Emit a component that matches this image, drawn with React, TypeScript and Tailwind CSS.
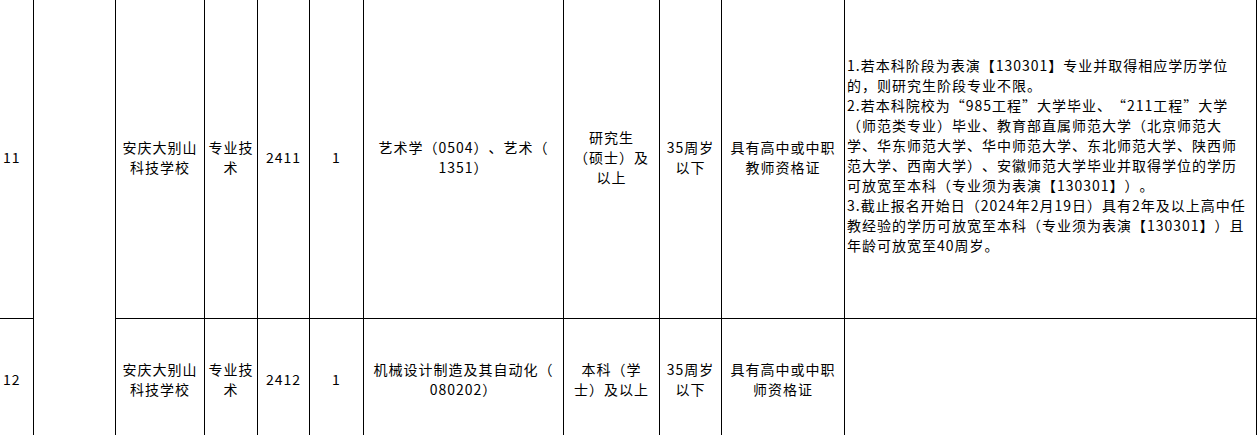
import React from 'react';

// 岗位表的两行，列宽按截图量出
const cols = 'grid-cols-[34px_82px_89px_53px_52px_54px_200px_96px_62px_123px_412px]';

const remarks = [
  '1.若本科阶段为表演【130301】专业并取得相应学历学位',
  '的，则研究生阶段专业不限。',
  '2.若本科院校为“985工程”大学毕业、“211工程”大学',
  '（师范类专业）毕业、教育部直属师范大学（北京师范大',
  '学、华东师范大学、华中师范大学、东北师范大学、陕西师',
  '范大学、西南大学）、安徽师范大学毕业并取得学位的学历',
  '可放宽至本科（专业须为表演【130301】）。',
  '3.截止报名开始日（2024年2月19日）具有2年及以上高中任',
  '教经验的学历可放宽至本科（专业须为表演【130301】）且',
  '年龄可放宽至40周岁。',
];

const rows = [
  {
    no: '11',
    cells: [
      ['安庆大别山', '科技学校'],
      ['专业技', '术'],
      ['2411'],
      ['1'],
      ['艺术学（0504）、艺术（', '1351）'],
      ['研究生', '（硕士）及', '以上'],
      ['35周岁', '以下'],
      ['具有高中或中职', '教师资格证'],
    ],
    remarks,
  },
  {
    no: '12',
    cells: [
      ['安庆大别山', '科技学校'],
      ['专业技', '术'],
      ['2412'],
      ['1'],
      ['机械设计制造及其自动化（', '080202）'],
      ['本科（学', '士）及以上'],
      ['35周岁', '以下'],
      ['具有高中或中职', '师资格证'],
    ],
    remarks: [] as string[],
  },
];

function Cell({ lines }: { lines: string[] }) {
  return (
    <div className="flex flex-col items-center justify-center text-center border-r border-b border-black">
      {lines.map((l, i) => (
        <div key={i} className="whitespace-nowrap">{l}</div>
      ))}
    </div>
  );
}

export default function App() {
  return (
    <div className="h-[435px] w-[1257px] overflow-hidden bg-white text-black">
      <div
        className={`grid ${cols} grid-rows-[323px_120px] -mt-[4px] text-[14px] leading-[20px] tracking-[1px] [text-spacing-trim:space-all]`}
        style={{ fontFamily: '"Noto Sans CJK SC", "Noto Sans", sans-serif' }}
      >
        {rows.map((row, r) => (
          <React.Fragment key={row.no}>
            <div className="flex items-center pl-[3px] border-r border-b border-black">{row.no}</div>
            {r === 0 && <div className="row-span-2 border-r border-b border-black" />}
            {row.cells.map((c, i) => (
              <Cell key={i} lines={c} />
            ))}
            <div className="flex flex-col justify-center pl-[2px] pb-[5px] border-r border-b border-black">
              {row.remarks.map((l, i) => (
                <div key={i} className="whitespace-nowrap">{l}</div>
              ))}
            </div>
          </React.Fragment>
        ))}
      </div>
    </div>
  );
}
